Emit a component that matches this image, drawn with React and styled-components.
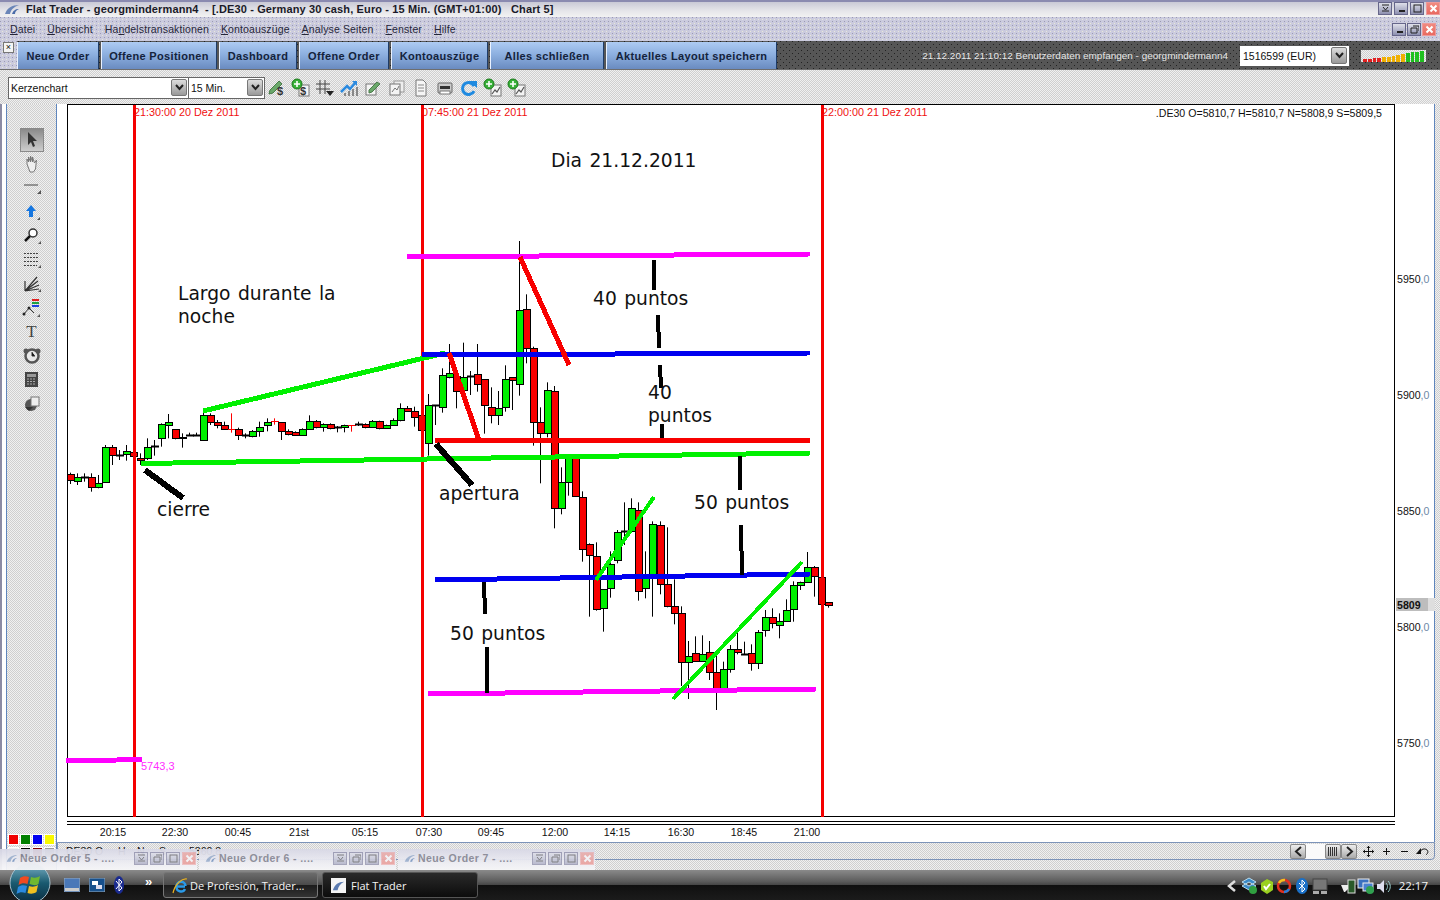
import React from 'react';
import styled, { createGlobalStyle, css } from 'styled-components';

const GlobalStyle = createGlobalStyle`
  html, body { margin: 0; padding: 0; background: #fff; }
  #root { width: 1440px; height: 900px; overflow: hidden; }
  * { box-sizing: border-box; }
`;

const checker = css`
  background-color: #e2e2e2;
  background-image: repeating-conic-gradient(#cfcfcf 0 25%, #f0f0f0 0 50%);
  background-size: 2px 2px;
`;
const lavender = css`
  background-color: #cbcbde;
  background-image:
    radial-gradient(circle at 0.5px 0.5px, #9a9ab4 0.7px, transparent 0.8px),
    radial-gradient(circle at 0.5px 0.5px, #e8e8d8 0.7px, transparent 0.8px);
  background-size: 4px 4px, 4px 4px;
  background-position: 0 0, 2px 2px;
`;

const Page = styled.div`
  position: relative;
  width: 1440px;
  height: 900px;
  overflow: hidden;
  display: flex;
  flex-direction: column;
  font-family: "Liberation Sans", Arial, sans-serif;
  color: #111;
`;
const TitleBar = styled.div`
  height: 17px;
  display: flex;
  align-items: center;
  padding: 0 0 2px 4px;
  border-top: 2px solid #8a8ab0;
  background: linear-gradient(#c9c9d6, #e6e6ea 60%, #f2f2f2);
`;
const AppGlyph = styled.svg`
  width: ${(p) => p.$w || 16}px;
  height: 12px;
  flex: none;
`;
const TitleText = styled.div`
  margin-left: 6px;
  font-size: 11px;
  font-weight: 700;
  letter-spacing: 0.13px;
  white-space: pre;
  color: #1a1a28;
  flex: 1;
`;
const WinButtons = styled.div`
  display: flex;
  gap: ${(p) => p.$gap || 2}px;
  margin-right: ${(p) => p.$right || 0}px;
`;
const WinBtn = styled.div`
  width: 14px;
  height: 13px;
  display: flex;
  align-items: center;
  justify-content: center;
  border: 1px solid ${(p) => (p.$close ? '#e99' : '#66668a')};
  background: ${(p) => (p.$close ? 'linear-gradient(#f08a80,#e86a60)' : 'linear-gradient(#dfe0ea,#8d90b0)')};
  opacity: ${(p) => (p.$faded ? 0.55 : 1)};
`;
const MenuBar = styled.div`
  height: 24px;
  display: flex;
  align-items: center;
  padding-left: 10px;
  gap: 12px;
  ${lavender}
`;
const MenuItem = styled.span`
  font-size: 10.5px;
  letter-spacing: 0.13px;
  color: #26263a;
  white-space: nowrap;
  u { text-decoration-thickness: 1px; }
`;
const MenuSpacer = styled.div`
  flex: 1;
`;
const TabBar = styled.div`
  height: 28px;
  display: flex;
  align-items: stretch;
  background-color: #565656;
  background-image:
    radial-gradient(circle at 0.5px 0.5px, #222 0.7px, transparent 0.8px),
    radial-gradient(circle at 0.5px 0.5px, #222 0.7px, transparent 0.8px);
  background-size: 6px 6px;
  background-position: 0 0, 3px 3px;
`;
const TabGrip = styled.div`
  position: relative;
  width: 17px;
  flex: none;
  ${lavender}
`;
const GripClose = styled.div`
  width: 11px;
  height: 11px;
  margin: 1px 0 0 3px;
  background: #f4f4f4;
  border: 1px solid #777;
  font-size: 9px;
  line-height: 8px;
  text-align: center;
`;
const Tabs = styled.div`
  display: flex;
  padding-top: 1px;
  gap: 2px;
`;
const Tab = styled.div`
  width: ${(p) => p.$w}px;
  display: flex;
  align-items: center;
  justify-content: center;
  font-size: 11px;
  font-weight: 700;
  letter-spacing: 0.33px;
  color: #14233c;
  border-left: 1px solid #eaf2ff;
  border-right: 1px solid #1e3c68;
  background: linear-gradient(#aecbf2, #8db0e0 45%, #6a8bc0);
  white-space: nowrap;
`;
const TabStatus = styled.div`
  flex: 1;
  display: flex;
  align-items: center;
  justify-content: flex-end;
  padding: 1px 14px 0 0;
`;
const StatusText = styled.span`
  font-size: 9.96px;
  color: #e6e6e6;
  white-space: nowrap;
  margin-right: 12px;
`;
const AccountSelect = styled.div`
  width: 109px;
  height: 20px;
  background: #fff;
  display: flex;
  align-items: center;
  justify-content: space-between;
  padding: 0 2px 0 3px;
  font-size: 10.5px;
  margin-right: 12px;
`;
const DropBtn = styled.div`
  width: 16px;
  height: 17px;
  flex: none;
  display: flex;
  align-items: center;
  justify-content: center;
  border: 1px solid #777;
  border-radius: 2px;
  background: linear-gradient(#ddd, #999);
`;
const Meter = styled.div`
  width: 65px;
  height: 12px;
  display: flex;
  align-items: flex-end;
  gap: 1px;
  padding: 0 2px;
  ${checker}
`;
const MeterBar = styled.div`
  width: 4px;
  height: ${(p) => p.$h}px;
  background: ${(p) => p.$c};
`;
const Toolbar = styled.div`
  height: 35px;
  display: flex;
  align-items: center;
  padding: 1px 0 0 8px;
  border-top: 1px solid #6e6e6e;
  ${checker}
`;
const ComboGroup = styled.div`
  display: flex;
  align-items: center;
  height: 22px;
  border: 1px solid #666;
  background: #fff;
  margin-right: 1px;
`;
const Combo = styled.div`
  width: ${(p) => p.$w}px;
  height: 100%;
  display: flex;
  align-items: center;
  justify-content: space-between;
  padding: 0 1px 0 2px;
  font-size: 10.5px;
  border-right: ${(p) => (p.$divider ? '1px solid #666' : 'none')};
`;
const ToolIcons = styled.div`
  display: flex;
  gap: 4px;
  margin-left: 1px;
`;
const Workspace = styled.div`
  flex: 1;
  display: flex;
  min-height: 0;
`;
const ToolFrame = styled.div`
  width: 67px;
  flex: none;
  padding-left: 6px;
  padding-right: 10px;
  background: #fff;
  border-left: 2px solid #8c8ca4;
`;
const ToolColumn = styled.div`
  height: 100%;
  margin-left: -2px;
  display: flex;
  flex-direction: column;
  align-items: center;
  padding: 24px 0 13px;
  border-left: 1px solid #5f86bd;
  border-right: 1px solid #5f86bd;
  ${checker}
`;
const ToolBtn = styled.div`
  width: 24px;
  height: 24px;
  flex: none;
  display: flex;
  align-items: center;
  justify-content: center;
  background: ${(p) => (p.$active ? 'linear-gradient(#8a8a8a,#cdcdcd)' : 'transparent')};
  border: ${(p) => (p.$active ? '1px solid #8a8a8a' : 'none')};
  font-family: "Liberation Serif", serif;
  font-size: 17px;
  color: #444;
`;
const Swatches = styled.div`
  margin-top: auto;
  display: grid;
  grid-template-columns: repeat(4, 9px);
  gap: 4px 3px;
`;
const Swatch = styled.div`
  width: 9px;
  height: 9px;
  background: ${(p) => p.$c};
  outline: 1px solid #fff;
`;
const ChartColumn = styled.div`
  flex: 1;
  display: flex;
  flex-direction: column;
  min-width: 0;
  ${checker}
`;
const ChartSurface = styled.div`
  height: 738px;
  flex: none;
  background: #fff;
  display: flex;
  border-right: 1px solid #5f86bd;
  margin-right: 5px;
`;
const ChartSvg = styled.svg`
  display: block;
  overflow: visible;
  flex: none;
  font-family: "Liberation Sans", Arial, sans-serif;
`;
const Note = styled.text`
  font-family: "DejaVu Sans", Verdana, sans-serif;
  font-size: 18.7px;
  word-spacing: 1.5px;
  fill: #111;
`;
const AxisText = styled.text`
  font-size: 10.6px;
  fill: #111;
`;
const MarkerText = styled.text`
  font-size: 10.8px;
  fill: #f01010;
`;
const BottomBar = styled.div`
  height: 18px;
  margin: 0 5px 0 -10px;
  display: flex;
  align-items: center;
  border: 1px solid #7c93b8;
  border-radius: 0 0 4px 4px;
  padding: 0 3px 0 5px;
  font-size: 10.5px;
  overflow: hidden;
  ${checker}
`;
const QuoteLine = styled.div`
  flex: 1;
  display: flex;
  white-space: nowrap;
`;
const QuoteCell = styled.span`
  width: ${(p) => p.$w}px;
  flex: none;
`;
const NavCluster = styled.div`
  display: flex;
  align-items: center;
  height: 16px;
`;
const NavBtn = styled.div`
  width: ${(p) => p.$w || 16}px;
  height: 15px;
  display: flex;
  align-items: center;
  justify-content: center;
  margin-left: ${(p) => p.$ml || 0}px;
  border: ${(p) => (p.$plain ? 'none' : '1px solid #888')};
  border-radius: 2px;
  background: ${(p) => (p.$plain ? 'transparent' : 'linear-gradient(#eee,#aaa)')};
`;
const NavTrack = styled.div`
  width: 19px;
  height: 15px;
  background: #fafafa;
`;
const OrderWindows = styled.div`
  position: absolute;
  left: 0;
  bottom: 30px;
  height: 21px;
  display: flex;
  gap: 2px;
`;
const OrderWindow = styled.div`
  width: 197px;
  height: 21px;
  display: flex;
  align-items: center;
  padding: 0 0 3px 6px;
  background: linear-gradient(#d8d8e6, #efeff4 70%, #f6f6f8);
  opacity: 0.95;
`;
const OrderTitle = styled.span`
  margin-left: 2px;
  font-size: 10.5px;
  letter-spacing: 0.4px;
  color: #8b8b98;
  flex: 1;
  font-weight: 700;
  white-space: nowrap;
`;
const Taskbar = styled.div`
  height: 30px;
  flex: none;
  display: flex;
  align-items: stretch;
  background: linear-gradient(#8a8a8a 0, #5c5c5c 38%, #454545 50%, #101010 51%, #1b1b1b 100%);
`;
const StartOrb = styled.svg`
  width: 44px;
  height: 30px;
  margin-left: 8px;
  flex: none;
  overflow: visible;
`;
const QuickLaunch = styled.div`
  display: flex;
  align-items: center;
  gap: 9px;
  margin-left: 12px;
  width: 99px;
`;
const QuickMore = styled.span`
  color: #fff;
  font-size: 13px;
  font-weight: 700;
  margin: -8px 0 0 12px;
`;
const TaskButton = styled.div`
  width: ${(p) => p.$w}px;
  height: 26px;
  margin: 2px 4px 2px 0;
  display: flex;
  align-items: center;
  gap: ${(p) => p.$gap}px;
  padding: 0 8px;
  border: 1px solid ${(p) => (p.$active ? '#555' : '#777')};
  border-radius: 3px;
  background: ${(p) => (p.$active ? 'linear-gradient(#2a2a2a,#0c0c0c)' : 'linear-gradient(#6c6c6c 0,#4a4a4a 50%,#1c1c1c 52%,#333 100%)')};
  color: #f4f4f4;
  font-family: "Open Sans", "DejaVu Sans", sans-serif;
  font-size: 11px;
  white-space: nowrap;
`;
const Tray = styled.div`
  margin-left: auto;
  display: flex;
  align-items: center;
  gap: 1px;
  padding-right: 12px;
  margin-top: 1px;
`;
const TraySvg = styled.svg`
  flex: none;
  margin-left: ${(p) => p.$ml || 0}px;
`;
const Clock = styled.span`
  font-family: "Open Sans", sans-serif;
  color: #f4f4f4;
  font-size: 11.5px;
  margin-left: 6px;
`;

const g = 'g', r = 'r', d = 'd', x = 'x';
const seg = (base, rows) => rows.map(([c, t, b, wt, wb]) => ({
  c,
  t: base + t / 3,
  b: base + b / 3,
  wt: base + (wt ?? t) / 3,
  wb: base + (wb ?? b) / 3,
}));
const candles = [
  ...seg(390, [
    [r,253,271,248,282],[g,262,274,250,285],[d,260,260,250,275],[r,260,292,250,305],[g,280,292,255,295],
    [g,172,277,165,277],[r,172,195,165,225],[d,194,194,180,210],[g,184,193,165,212],[r,187,199,170,215],
    [r,203,211,190,225],[g,172,203,145,210],[d,167,167,150,197],[g,103,145,100,170],[g,97,106,72,145],
    [r,118,145,118,148],[g,140,145,130,173],[d,134,134,128,138],[d,134,134,128,138],[g,76,151,60,151],
    [r,76,97,70,105],[r,97,106,90,115],[r,106,118,95,120],[x,118,118,70,128],[r,118,136,113,150],
    [d,136,136,130,145],[g,124,139,120,142],[g,112,124,95,140],[g,97,106,85,124],[x,94,94,85,104],
    [r,97,124,97,150],[r,124,133,118,136],[r,127,136,124,138],[g,118,136,115,138],[g,94,118,76,120],
    [r,94,112,90,115],[g,103,112,100,125],[r,103,115,100,118],[d,112,112,108,127],[g,106,112,104,127],
    [x,106,106,106,125],[d,103,103,95,108],[r,103,112,100,115],[g,94,112,90,114],[r,94,115,92,118],
    [g,106,115,104,117],[g,91,106,85,108],[g,55,91,40,94],[r,55,64,48,66],[r,64,82,50,110],[r,76,121,45,122],
  ]),
  ...seg(235, [
    [g,511,625,477,662],[d,511,511,511,570],[g,421,517,400,533],[g,415,427,327,430],[r,424,469,400,520],
    [g,427,466,323,468],[d,424,424,408,480],[r,418,448,327,470],[r,433,511,433,596],[r,517,541,457,565],
    [g,520,541,468,570],[g,433,517,391,530],[r,427,436,427,525],[g,226,448,18,482],[r,223,340,178,385],
    [r,340,562,335,632],[r,562,595,517,745],[g,466,595,442,607],[r,469,820,453,880],[g,742,820,697,838],
    [g,668,742,667,782],[r,670,784,668,786],
  ]),
  ...seg(490, [
    [r,20,178,4,215],[r,163,196,160,380],[r,199,358,157,362],[g,298,355,298,425],[g,223,295,184,323],
    [g,127,211,120,220],[d,124,124,37,165],[g,55,124,25,128],[r,61,304,37,332],[g,253,295,184,325],
    [g,103,253,94,380],[r,106,283,94,313],[r,283,349,112,352],[r,349,370,268,403],[r,370,517,349,588],
    [g,499,517,453,627],[r,490,514,439,516],[g,493,514,436,516],
  ]),
  ...seg(540, [
    [r,337,397,303,420],[r,397,445,347,510],[g,388,445,365,448],[g,328,388,315,398],[r,328,337,275,343],
    [d,342,342,305,344],[r,340,370,313,392],[g,277,370,270,387],[g,232,271,210,290],[r,232,250,205,265],
    [g,244,256,220,295],[g,211,244,178,246],[g,136,208,124,245],[g,127,136,125,150],[g,82,127,36,129],
    [r,82,109,78,170],[r,112,193,112,195],[r,187,196,187,203],
  ]),
];

const Candle = ({ c, t, b, wt, wb, i }) => {
  const px = Math.round(67 + 7.018 * i);
  const T = Math.round(t), B = Math.round(b);
  const mid = px + 3.5;
  if (c === d) {
    return (
      <g>
        <line x1={mid} x2={mid} y1={wt} y2={wb} stroke="#000" />
        <line x1={px} x2={px + 8} y1={T + 0.5} y2={T + 0.5} stroke="#000" strokeWidth="2" />
      </g>
    );
  }
  if (c === x) {
    return (
      <g>
        <line x1={mid} x2={mid} y1={wt} y2={wb} stroke="#f00" />
        <line x1={px} x2={px + 8} y1={T + 0.5} y2={T + 0.5} stroke="#f00" />
      </g>
    );
  }
  return (
    <g>
      <line x1={mid} x2={mid} y1={wt} y2={wb} stroke="#000" />
      <rect x={px + 0.5} y={T + 0.5} width="7" height={Math.max(B - T, 1)} fill={c === g ? '#00f000' : '#f80000'} stroke="#000" />
    </g>
  );
};

const thickLines = [
  ['#00f000', 5, 141, 463.5, 810, 453],
  ['#00f000', 5, 203, 411, 445, 353],
  ['#ff00ff', 5, 407, 257, 810, 254],
  ['#0000f0', 5, 422, 355, 810, 353],
  ['#f80000', 5, 435, 441, 810, 440],
  ['#f80000', 5, 449, 353, 479, 440],
  ['#f80000', 5, 520, 257, 569, 365],
  ['#0000f0', 5, 435, 580, 810, 574],
  ['#ff00ff', 5, 428, 694, 816, 689],
  ['#00f000', 4, 596, 580, 654, 497],
  ['#00f000', 4, 673, 699, 802, 562],
  ['#000', 6, 436, 444, 472, 485],
  ['#000', 6, 145, 470, 183, 498],
  ['#000', 4, 654, 260, 654, 290],
  ['#000', 4, 658, 315, 659, 348],
  ['#000', 4, 660, 365, 661, 388],
  ['#000', 4, 662, 424, 662, 438],
  ['#000', 4, 740, 456, 740, 490],
  ['#000', 4, 741, 525, 742, 575],
  ['#000', 4, 484, 582, 485, 614],
  ['#000', 4, 487, 647, 487, 693],
  ['#ff00ff', 5, 66, 761, 142, 759.5],
];
const notes = [
  ['Dia 21.12.2011', 551, 167],
  ['Largo durante la', 178, 300],
  ['noche', 178, 323],
  ['cierre', 157, 516],
  ['apertura', 439, 500],
  ['40 puntos', 593, 305],
  ['40', 648, 399],
  ['puntos', 648, 422],
  ['50 puntos', 694, 509],
  ['50 puntos', 450, 640],
];
const times = [['20:15',113],['22:30',175],['00:45',238],['21st',299],['05:15',365],['07:30',429],['09:45',491],['12:00',555],['14:15',617],['16:30',681],['18:45',744],['21:00',807]];
const prices = [['5950',283],['5900',399],['5850',515],['5800',631],['5750',747]];
const markers = [[134,'21:30:00 20 Dez 2011'],[422,'07:45:00 21 Dez 2011'],[822,'22:00:00 21 Dez 2011']];

const Chart = () => (
  <ChartSvg width="1373" height="738" viewBox="67 104 1373 738">
    <rect x="67.5" y="104.5" width="1327" height="712" fill="#fff" stroke="#000" />
    {candles.map((cd, i) => <Candle key={i} i={i} {...cd} />)}
    {markers.map(([mx]) => <rect key={mx} x={mx - 1} y="105" width="3" height="712" fill="#f40000" />)}
    {markers.map(([mx, t]) => <MarkerText key={t} x={mx} y="116">{t}</MarkerText>)}
    {thickLines.map(([c, w, a, b, e, f], i) => (
      <line key={i} x1={a} y1={b} x2={e} y2={f} stroke={c} strokeWidth={w} shapeRendering="crispEdges" />
    ))}
    {notes.map(([t, nx, ny]) => <Note key={t + nx} x={nx} y={ny}>{t}</Note>)}
    <text x="141" y="770" fontSize="11" fill="#ff30ff">5743,3</text>
    <AxisText x="1382" y="117" textAnchor="end">.DE30 O=5810,7 H=5810,7 N=5808,9 S=5809,5</AxisText>
    {prices.map(([p, y]) => (
      <AxisText key={p} x="1397" y={y}>{p}<tspan fill="#6f8aa8">,0</tspan></AxisText>
    ))}
    <rect x="1396" y="598" width="32" height="13" fill="#bdbdbd" />
    <rect x="1428" y="598" width="7" height="13" fill="#dedede" />
    <AxisText x="1397" y="609" fontWeight="700">5809</AxisText>
    <line x1="67" x2="1395" y1="821.5" y2="821.5" stroke="#000" />
    <line x1="67" x2="1395" y1="824.5" y2="824.5" stroke="#000" />
    {times.map(([t, tx]) => <AxisText key={t} x={tx} y="836" textAnchor="middle">{t}</AxisText>)}
  </ChartSvg>
);

const Ico = ({ children, s = 20 }) => <svg width={s} height={s} viewBox="0 0 20 20">{children}</svg>;
const Doc = ({ x: dx = 8, y: dy = 7 }) => <rect x={dx} y={dy} width="10" height="11" fill="#f4f4f4" stroke="#777" />;
const Plus = () => (
  <g>
    <circle cx="6" cy="6" r="5" fill="#38b038" stroke="#1a7a1a" />
    <path d="M6 3v6M3 6h6" stroke="#fff" strokeWidth="1.6" />
  </g>
);
const MiniChart = () => <path d="M9 16l3-4 2 2 3-5" stroke="#555" strokeWidth="1.2" fill="none" />;
const Dollar = ({ tx = 10, ty = 17 }) => <text x={tx} y={ty} fontSize="11" fontWeight="700" fill="#333" fontFamily="Liberation Sans">$</text>;

const toolbarIcons = [
  <Ico key="1"><path d="M3 12l9-9 3 3-9 9-4 1z" fill="#6aa86a" stroke="#4a7a4a" /><Dollar /></Ico>,
  <Ico key="2"><Doc /><Plus /><Dollar tx="9" ty="17" /></Ico>,
  <Ico key="3"><path d="M5 2v14M10 2v14M1 6h14M1 11h14" stroke="#444" /><path d="M11 13h8l-4 5z" fill="#222" /></Ico>,
  <Ico key="4"><path d="M2 14l6-6 3 3 5-6" stroke="#2a8ae0" strokeWidth="2.5" fill="none" /><path d="M13 3h5v5z" fill="#2a8ae0" /><path d="M6 18v-3M10 18v-5M14 18v-7M18 18v-9" stroke="#888" strokeWidth="2" /></Ico>,
  <Ico key="5"><Doc x="3" y="6" /><path d="M6 12l8-8 3 2-8 8-3 1z" fill="#6aa86a" stroke="#4a7a4a" /></Ico>,
  <Ico key="6"><rect x="7" y="3" width="10" height="11" fill="#eee" stroke="#999" /><Doc x="3" y="6" /><path d="M5 14l3-4 2 2 2-4" stroke="#777" fill="none" /></Ico>,
  <Ico key="7"><path d="M5 2h7l3 3v13H5z" fill="#f6f6f6" stroke="#777" /><path d="M7 7h6M7 10h6M7 13h6" stroke="#888" /></Ico>,
  <Ico key="8"><rect x="3" y="5" width="14" height="10" rx="1" fill="#ccc" stroke="#666" /><rect x="5" y="8" width="10" height="3" fill="#333" /><rect x="5" y="13" width="10" height="3" fill="#fff" stroke="#777" /></Ico>,
  <Ico key="9"><path d="M15 8a6 6 0 1 0 0 5" stroke="#1f8ae0" strokeWidth="3" fill="none" /><path d="M10 3h8v7z" fill="#1f8ae0" /></Ico>,
  <Ico key="10"><Doc /><Plus /><MiniChart /></Ico>,
  <Ico key="11"><Doc /><Plus /><MiniChart /></Ico>,
];

const Chevron = () => <svg width="9" height="7" viewBox="0 0 9 7"><path d="M1 1l3.5 4L8 1" stroke="#222" strokeWidth="2" fill="none" /></svg>;
const WinGlyph = ({ kind }) => {
  const paths = {
    down: <path d="M1 1h7M2 3l2.5 3L7 3M1 7h7" stroke="#222" fill="none" />,
    min: <path d="M2 7h6" stroke="#222" strokeWidth="2" />,
    max: <rect x="1" y="1" width="7" height="7" stroke="#222" fill="none" />,
    restore: <path d="M3 1h6v5M1 3h6v5H1z" stroke="#222" fill="none" />,
    close: <path d="M1.5 1.5l6 6M7.5 1.5l-6 6" stroke="#fff" strokeWidth="2" />,
  };
  return <svg width="9" height="9" viewBox="0 0 9 9">{paths[kind]}</svg>;
};
const Logo = ({ dark, w }) => (
  <AppGlyph viewBox="0 0 16 12" $w={w}>
    <path d="M1 11C3 5 8 2 15 2 10 4 7 6 6 11z" fill={dark ? '#9fb2cf' : '#6a86b8'} />
    <path d="M8 11c1-3 3-5 7-5-3 1-4 3-4 5z" fill={dark ? '#7f9ac2' : '#4a6ca8'} />
  </AppGlyph>
);

const toolIcons = [
  <svg key="a" width="16" height="18" viewBox="0 0 16 18"><path d="M4 1v13l3-3 2 5 2-1-2-5h4z" fill="#333" /></svg>,
  <svg key="b" width="18" height="18" viewBox="0 0 18 18"><path d="M4 9V4l1.5 3V2l2 5V1l2 6V2l2 6 2-3-1 9-2 3H7z" fill="#eee" stroke="#777" /></svg>,
  <svg key="c" width="20" height="14" viewBox="0 0 20 14"><path d="M2 4h14" stroke="#444" /><path d="M19 13h-4l4-4z" fill="#555" /></svg>,
  <svg key="d" width="18" height="18" viewBox="0 0 18 18"><path d="M8 2l5 6H10v6H6V8H3z" fill="#1576e0" /><path d="M17 17h-3l3-3z" fill="#555" /></svg>,
  <svg key="e" width="18" height="18" viewBox="0 0 18 18"><circle cx="10" cy="6" r="4" fill="#fff" stroke="#333" strokeWidth="1.5" /><path d="M7 9l-5 5" stroke="#111" strokeWidth="2.5" /><path d="M18 17h-3l3-3z" fill="#555" /></svg>,
  <svg key="f" width="20" height="18" viewBox="0 0 20 18"><path d="M2 2.5h15M2 6.5h15" stroke="#444" strokeDasharray="2 1" /><path d="M2 10.5h15M2 14.5h13" stroke="#444" strokeDasharray="2 1" /><path d="M19 17h-3l3-3z" fill="#555" /></svg>,
  <svg key="g" width="20" height="18" viewBox="0 0 20 18"><path d="M3 16L15 2M3 16L16 6M3 16L17 10M3 16L17 14M3 16V6" stroke="#333" strokeWidth="1.2" /><path d="M19 17h-3l3-3z" fill="#555" /></svg>,
  <svg key="h" width="20" height="20" viewBox="0 0 20 20"><rect x="10" y="1" width="7" height="2" fill="#e02020" /><rect x="10" y="4" width="7" height="2" fill="#20a040" /><rect x="10" y="7" width="7" height="2" fill="#2040e0" /><path d="M2 16l5-6 5 5" stroke="#333" fill="none" /><circle cx="2" cy="16" r="1.5" fill="#222" /><circle cx="7" cy="10" r="1.5" fill="#222" /><path d="M18 19h-3l3-3z" fill="#555" /></svg>,
  <span key="i">T</span>,
  <svg key="j" width="20" height="18" viewBox="0 0 20 18"><circle cx="10" cy="9" r="6.5" fill="#e8e8e8" stroke="#555" strokeWidth="2.5" /><path d="M10 5v4h3" stroke="#333" /><circle cx="4" cy="4" r="2.5" fill="#555" /><circle cx="16" cy="4" r="2.5" fill="#555" /></svg>,
  <svg key="k" width="14" height="16" viewBox="0 0 14 16"><rect width="13" height="15" fill="#444" /><rect x="2" y="2" width="9" height="3" fill="#999" /><path d="M2 7h9M2 9.5h9M2 12h9" stroke="#aaa" strokeDasharray="2 1" /></svg>,
  <svg key="l" width="18" height="18" viewBox="0 0 18 18"><circle cx="8" cy="10" r="6" fill="#555" /><rect x="8" y="2" width="8" height="9" fill="#eee" stroke="#777" /><path d="M2 12h8l-4 4z" fill="#333" /></svg>,
];

const tabs = [['Neue Order',82],['Offene Positionen',116],['Dashboard',78],['Offene Order',90],['Kontoauszüge',97],['Alles schließen',114],['Aktuelles Layout speichern',171]];
const meter = [[3,'#e02020'],[3,'#e02020'],[4,'#e02020'],[4,'#e02020'],[5,'#f0b000'],[5,'#f0b000'],[6,'#f0b000'],[7,'#f0b000'],[8,'#f0b000'],[9,'#20c020'],[10,'#20c020'],[10,'#20c020'],[11,'#20c020']];

const TrayIcon = ({ children, w = 16, ml }) => <TraySvg width={w} height="18" viewBox={`0 0 ${w} 18`} $ml={ml}>{children}</TraySvg>;

export default function App() {
  return (
    <Page>
      <GlobalStyle />
      <TitleBar>
        <Logo />
        <TitleText>Flat Trader - georgmindermann4  - [.DE30 - Germany 30 cash, Euro - 15 Min. (GMT+01:00)   Chart 5]</TitleText>
        <WinButtons>
          <WinBtn><WinGlyph kind="down" /></WinBtn>
          <WinBtn><WinGlyph kind="min" /></WinBtn>
          <WinBtn><WinGlyph kind="max" /></WinBtn>
          <WinBtn $close><WinGlyph kind="close" /></WinBtn>
        </WinButtons>
      </TitleBar>
      <MenuBar>
        <MenuItem><u>D</u>atei</MenuItem>
        <MenuItem><u>Ü</u>bersicht</MenuItem>
        <MenuItem>Ha<u>n</u>delstransaktionen</MenuItem>
        <MenuItem><u>K</u>ontoauszüge</MenuItem>
        <MenuItem><u>A</u>nalyse Seiten</MenuItem>
        <MenuItem><u>F</u>enster</MenuItem>
        <MenuItem><u>H</u>ilfe</MenuItem>
        <MenuSpacer />
        <WinButtons $gap={1} $right={4}>
          <WinBtn><WinGlyph kind="min" /></WinBtn>
          <WinBtn><WinGlyph kind="restore" /></WinBtn>
          <WinBtn $close><WinGlyph kind="close" /></WinBtn>
        </WinButtons>
      </MenuBar>
      <TabBar>
        <TabGrip><GripClose>×</GripClose></TabGrip>
        <Tabs>
          {tabs.map(([t, w]) => <Tab key={t} $w={w}>{t}</Tab>)}
        </Tabs>
        <TabStatus>
          <StatusText>21.12.2011 21:10:12 Benutzerdaten empfangen - georgmindermann4</StatusText>
          <AccountSelect>1516599 (EUR)<DropBtn><Chevron /></DropBtn></AccountSelect>
          <Meter>{meter.map(([h, c], i) => <MeterBar key={i} $h={h} $c={c} />)}</Meter>
        </TabStatus>
      </TabBar>
      <Toolbar>
        <ComboGroup>
          <Combo $w={180} $divider>Kerzenchart<DropBtn><Chevron /></DropBtn></Combo>
          <Combo $w={75}>15 Min.<DropBtn><Chevron /></DropBtn></Combo>
        </ComboGroup>
        <ToolIcons>{toolbarIcons}</ToolIcons>
      </Toolbar>
      <Workspace>
        <ToolFrame>
          <ToolColumn>
            {toolIcons.map((ic, i) => <ToolBtn key={i} $active={i === 0}>{ic}</ToolBtn>)}
            <Swatches>
              {['#f00000', '#008000', '#0000f0', '#f8f800', '#f0f0f0', '#000', '#800000', '#999'].map((c, i) => <Swatch key={i} $c={c} />)}
            </Swatches>
          </ToolColumn>
        </ToolFrame>
        <ChartColumn>
          <ChartSurface><Chart /></ChartSurface>
          <BottomBar>
            <QuoteLine>
              <QuoteCell $w={55}>.DE30 O</QuoteCell>
              <QuoteCell $w={19}>H</QuoteCell>
              <QuoteCell $w={22}>N</QuoteCell>
              <QuoteCell $w={30}>S</QuoteCell>
              <QuoteCell $w={34}>5860,8</QuoteCell>
            </QuoteLine>
            <NavCluster>
              <NavBtn><svg width="9" height="11" viewBox="0 0 9 11"><path d="M7 1L2 5.5 7 10" stroke="#222" strokeWidth="2" fill="none" /></svg></NavBtn>
              <NavTrack />
              <NavBtn><svg width="10" height="9" viewBox="0 0 10 9"><path d="M.5 0v9M2.5 0v9M4.5 0v9M6.5 0v9M8.5 0v9" stroke="#333" /></svg></NavBtn>
              <NavBtn><svg width="9" height="11" viewBox="0 0 9 11"><path d="M2 1l5 4.5L2 10" stroke="#222" strokeWidth="2" fill="none" /></svg></NavBtn>
              <NavBtn $plain $w={18} $ml={2}><svg width="11" height="11" viewBox="0 0 11 11"><path d="M5.5 0v11M0 5.5h11" stroke="#111" /><path d="M5.5 0L3.5 2h4zM5.5 11l-2-2h4zM0 5.5l2-2v4zM11 5.5l-2-2v4z" fill="#111" /></svg></NavBtn>
              <NavBtn $plain $w={18}><svg width="9" height="9" viewBox="0 0 9 9"><path d="M4.5 1v7M1 4.5h7" stroke="#111" /></svg></NavBtn>
              <NavBtn $plain $w={18}><svg width="9" height="9" viewBox="0 0 9 9"><path d="M1 4.5h7" stroke="#111" /></svg></NavBtn>
              <NavBtn $plain $w={18}><svg width="13" height="9" viewBox="0 0 13 9"><path d="M4 5C5 2 9 1 11 3s0 4-1 5" stroke="#111" fill="none" /><path d="M0 7l5-6v6z" fill="#111" /></svg></NavBtn>
            </NavCluster>
          </BottomBar>
        </ChartColumn>
      </Workspace>
      <OrderWindows>
        {[5, 6, 7].map((n) => (
          <OrderWindow key={n}>
            <Logo dark w={12} />
            <OrderTitle>Neue Order {n} - ....</OrderTitle>
            <WinButtons $right={1}>
              <WinBtn $faded><WinGlyph kind="down" /></WinBtn>
              <WinBtn $faded><WinGlyph kind="restore" /></WinBtn>
              <WinBtn $faded><WinGlyph kind="max" /></WinBtn>
              <WinBtn $faded $close><WinGlyph kind="close" /></WinBtn>
            </WinButtons>
          </OrderWindow>
        ))}
      </OrderWindows>
      <Taskbar>
        <StartOrb viewBox="0 0 44 30">
          <defs>
            <linearGradient id="orbGlass" x1="0" y1="0" x2="0" y2="1">
              <stop offset="0" stopColor="#7fb4c8" />
              <stop offset="0.5" stopColor="#1a5a70" />
              <stop offset="1" stopColor="#0a2c40" />
            </linearGradient>
          </defs>
          <circle cx="22" cy="13" r="20" fill="url(#orbGlass)" stroke="#a8c0cc" />
          <path d="M12 8c3-2 6-2 9-1l-1.5 7c-3-1-6-1-9 1z" fill="#f04a20" />
          <path d="M23 7c3 1 6 1 9-1l-1.5 8c-3 2-6 1-9 0z" fill="#70b830" />
          <path d="M10 17c3-2 6-2 9-1l-1.5 7c-3-1-6-1-9 1z" fill="#2a8ae0" />
          <path d="M21 16c3 1 6 1 9-1l-1.5 7c-3 2-6 2-9 1z" fill="#f0c020" />
        </StartOrb>
        <QuickLaunch>
          <svg width="16" height="14" viewBox="0 0 16 14"><rect width="16" height="14" fill="#4a78b8" stroke="#9ab" /><rect x="1" y="10" width="14" height="3" fill="#ccc" /></svg>
          <svg width="16" height="14" viewBox="0 0 16 14"><rect width="16" height="14" fill="#17508c" stroke="#9ab" /><rect x="3" y="3" width="6" height="4" fill="#fff" /><rect x="7" y="7" width="6" height="4" fill="#dde" /></svg>
          <svg width="10" height="18" viewBox="0 0 10 18"><ellipse cx="5" cy="9" rx="5" ry="9" fill="#1a2a90" /><path d="M2 5l6 7-3 3V3l3 3-6 7" stroke="#fff" fill="none" /></svg>
          <QuickMore>»</QuickMore>
        </QuickLaunch>
        <TaskButton $w={155} $gap={1}>
          <svg width="17" height="17" viewBox="0 0 17 17">
            <path d="M13 9.5H5M4.5 9.5a4.500 4.500 0 0 1 9-.5M13 12a4.500 4.500 0 0 1-8.500-2.500" stroke="#2a9ae8" strokeWidth="2.5" fill="none" />
            <path d="M1 16C3 7 10 1 15 2" stroke="#e8b020" strokeWidth="1.2" fill="none" />
          </svg>
          De Profesión, Trader...
        </TaskButton>
        <TaskButton $w={156} $gap={5} $active>
          <svg width="15" height="15" viewBox="0 0 16 16"><rect width="16" height="16" fill="#f4f4f4" /><path d="M2 13C4 7 8 4 14 4 10 6 8 9 7 13z" fill="#5a7ab0" /></svg>
          Flat Trader
        </TaskButton>
        <Tray>
          <TrayIcon w={14}><path d="M10 4L4 9l6 5" stroke="#ddd" strokeWidth="2.5" fill="none" /></TrayIcon>
          <TrayIcon w={18}><path d="M9 1l7 4-7 4-7-4zM2 9l7 4 7-4-7-4z" fill="#3a8ac8" stroke="#bde" /><circle cx="13" cy="13" r="4" fill="#30a040" /></TrayIcon>
          <TrayIcon w={16}><path d="M2 6l6-4 6 3v8l-6 4-6-4z" fill="#9ad020" /><path d="M5 9l2 3 4-5" stroke="#fff" strokeWidth="2" fill="none" /></TrayIcon>
          <TrayIcon w={16}><circle cx="8" cy="9" r="6" fill="none" stroke="#e03020" strokeWidth="2.5" /><path d="M3 6a6 6 0 0 1 6-3" stroke="#f0c020" strokeWidth="2.5" fill="none" /><path d="M13 12a6 6 0 0 1-5 3" stroke="#2080e0" strokeWidth="2.5" fill="none" /></TrayIcon>
          <TrayIcon w={14} ml={2}><ellipse cx="7" cy="9" rx="6" ry="8" fill="#1a70c8" /><path d="M4 6l6 6-3 3V3l3 3-6 6" stroke="#fff" fill="none" /></TrayIcon>
          <TrayIcon w={18} ml={1}><rect x="2" y="2" width="14" height="11" fill="#777" stroke="#444" /><rect x="2" y="14" width="6" height="3" fill="#aaa" /><rect x="10" y="14" width="6" height="3" fill="#aaa" /></TrayIcon>
          <TrayIcon w={16} ml={10}><rect x="8" y="3" width="7" height="13" fill="#2a5a2a" stroke="#ddd" /><path d="M1 8h7v4l-3 3H4z" fill="#eee" /></TrayIcon>
          <TrayIcon w={18}><rect x="1" y="2" width="11" height="9" fill="#3a70c0" stroke="#eee" /><rect x="6" y="6" width="10" height="8" fill="#4a80d0" stroke="#eee" /><circle cx="13" cy="13" r="4" fill="#30a050" /></TrayIcon>
          <TrayIcon w={16}><path d="M1 7h3l4-4v13l-4-4H1z" fill="#dde" /><path d="M10 6c2 2 2 5 0 7M12 4c3 3 3 8 0 11" stroke="#9cc" fill="none" /></TrayIcon>
          <Clock>22:17</Clock>
        </Tray>
      </Taskbar>
    </Page>
  );
}
